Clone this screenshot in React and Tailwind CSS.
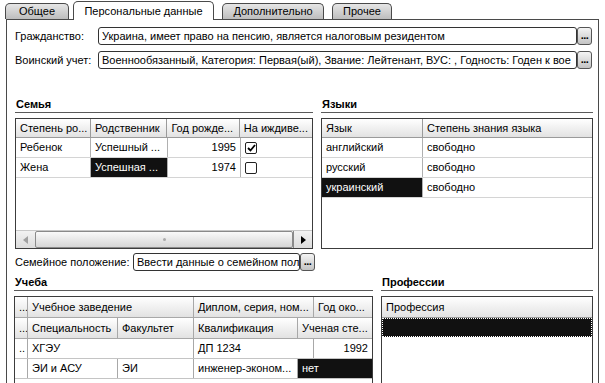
import React from "react";

const font = "font-['Liberation_Sans',Arial,sans-serif]";

function Tab({ label, active, className }) {
  if (active) {
    return (
      <div className={`h-[19px] -mb-px relative z-10 flex items-center justify-center bg-white border border-[#4a4a4a] border-b-0 rounded-t-[5px] ${className}`}>
        {label}
      </div>
    );
  }
  return (
    <div className={`h-[16px] flex items-center justify-center bg-gradient-to-b from-[#e6e6e6] to-[#bdbdbd] border border-[#4a4a4a] border-b-0 rounded-t-[5px] ${className}`}>
      {label}
    </div>
  );
}

function DotsButton() {
  return (
    <div className="w-[15px] h-full flex items-end justify-center pb-[3px] bg-gradient-to-b from-[#f4f4f4] to-[#c4c4c4] border border-[#555] rounded-[3px] font-bold text-[11px] leading-none tracking-[-0.5px]">
      ...
    </div>
  );
}

function Field({ value, width }) {
  return (
    <div className="flex h-[18px]">
      <div className={`${width} h-full border border-[#333] rounded-[3px] px-[3px] flex items-center overflow-hidden whitespace-nowrap`}>
        {value}
      </div>
      <DotsButton />
    </div>
  );
}

function SectionTitle({ title }) {
  return (
    <div className="h-[15px] border-b border-[#5a5a5a] font-bold text-[11px] leading-[13px] pl-px">{title}</div>
  );
}

const hdr = "bg-gradient-to-b from-[#ffffff] to-[#e2e2e2]";

function Check({ checked }) {
  return (
    <div className="w-[12px] h-[12px] border border-[#222] rounded-[2px] flex items-center justify-center bg-white">
      {checked && (
        <svg width="9" height="8" viewBox="0 0 9 8">
          <path d="M1 4 L3.5 6.5 L8 1" stroke="#000" strokeWidth="1.8" fill="none" />
        </svg>
      )}
    </div>
  );
}

function FamilyGrid() {
  const rows = [
    { a: "Ребенок", b: "Успешный ...", c: "1995", d: true },
    { a: "Жена", b: "Успешная ...", c: "1974", d: false, sel: true },
  ];
  return (
    <div className="w-[298px] h-[131px] border border-[#3c3c3c] flex flex-col">
      <div className={`flex h-[19px] border-b border-[#9a9a9a] ${hdr}`}>
        <div className="w-[75px] border-r border-[#9a9a9a] px-[4px] flex items-center whitespace-nowrap">Степень ро...</div>
        <div className="w-[77px] border-r border-[#9a9a9a] px-[4px] flex items-center whitespace-nowrap">Родственник</div>
        <div className="w-[73px] border-r border-[#9a9a9a] px-[4px] flex items-center whitespace-nowrap">Год рожде...</div>
        <div className="flex-1 px-[4px] flex items-center whitespace-nowrap">На иждиве...</div>
      </div>
      {rows.map((r) => (
        <div key={r.a} className="flex h-[20px] border-b border-[#d4d4d4]">
          <div className="w-[75px] border-r border-[#b0b0b0] px-[4px] flex items-center">{r.a}</div>
          <div className={`w-[77px] border-r border-[#b0b0b0] px-[4px] flex items-center whitespace-nowrap ${r.sel ? "bg-[#111] text-white" : ""}`}>{r.b}</div>
          <div className="w-[73px] border-r border-[#b0b0b0] px-[4px] flex items-center justify-end">{r.c}</div>
          <div className="flex-1 px-[4px] flex items-center"><Check checked={r.d} /></div>
        </div>
      ))}
      <div className="flex-1" />
      <div className="h-[18px] flex bg-gradient-to-b from-[#f2f2f2] to-[#dcdcdc] border-t border-[#c8c8c8]">
        <div className="w-[19px] flex items-center justify-center">
          <svg width="5" height="8" viewBox="0 0 5 8"><path d="M5 0 L0 4 L5 8 Z" fill="#a0a0a0" /></svg>
        </div>
        <div className="flex-1 border border-[#8a8a8a] rounded-[2px] bg-gradient-to-b from-[#fafafa] to-[#d6d6d6] flex items-center justify-center">
          <div className="w-[3px] h-[3px] rounded-full bg-[#aaa]" />
        </div>
        <div className="w-[19px] flex items-center justify-center border-l border-[#8a8a8a]">
          <svg width="5" height="8" viewBox="0 0 5 8"><path d="M0 0 L5 4 L0 8 Z" fill="#000" /></svg>
        </div>
      </div>
    </div>
  );
}

function LangGrid() {
  const rows = [
    { a: "английский" },
    { a: "русский" },
    { a: "украинский", sel: true },
  ];
  return (
    <div className="w-[272px] h-[131px] border border-[#3c3c3c] flex flex-col">
      <div className={`flex h-[19px] border-b border-[#9a9a9a] ${hdr}`}>
        <div className="w-[101px] border-r border-[#9a9a9a] px-[4px] flex items-center">Язык</div>
        <div className="flex-1 px-[4px] flex items-center">Степень знания языка</div>
      </div>
      {rows.map((r) => (
        <div key={r.a} className="flex h-[20px] border-b border-[#d4d4d4]">
          <div className={`w-[101px] border-r border-[#b0b0b0] px-[4px] flex items-center ${r.sel ? "bg-[#111] text-white" : ""}`}>{r.a}</div>
          <div className="flex-1 px-[4px] flex items-center">свободно</div>
        </div>
      ))}
    </div>
  );
}

function EduGrid() {
  const c = "border-r border-[#a8a8a8] px-[4px] flex items-center whitespace-nowrap overflow-hidden";
  return (
    <div className="w-[359px] h-[100px] border border-[#3c3c3c] border-b-0 flex flex-col">
      <div className={`flex h-[21px] border-b border-[#a8a8a8] ${hdr}`}>
        <div className={`w-[13px] ${c} px-[2px]`}>...</div>
        <div className={`w-[166px] ${c}`}>Учебное заведение</div>
        <div className={`w-[120px] ${c}`}>Диплом, серия, ном...</div>
        <div className="flex-1 px-[4px] flex items-center whitespace-nowrap">Год око...</div>
      </div>
      <div className={`flex h-[21px] border-b border-[#a8a8a8] ${hdr}`}>
        <div className={`w-[13px] ${c} px-[2px]`}>...</div>
        <div className={`w-[90px] ${c}`}>Специальность</div>
        <div className={`w-[76px] ${c}`}>Факультет</div>
        <div className={`w-[104px] ${c}`}>Квалификация</div>
        <div className="flex-1 px-[4px] flex items-center whitespace-nowrap">Ученая сте...</div>
      </div>
      <div className="flex h-[20px] border-b border-[#c4c4c4]">
        <div className={`w-[13px] ${c} px-[2px]`}>..</div>
        <div className={`w-[166px] ${c}`}>ХГЭУ</div>
        <div className={`w-[120px] ${c}`}>ДП 1234</div>
        <div className="flex-1 px-[4px] flex items-center justify-end">1992</div>
      </div>
      <div className="flex h-[20px] border-b border-[#c4c4c4]">
        <div className={`w-[13px] ${c}`}></div>
        <div className={`w-[90px] ${c}`}>ЭИ и АСУ</div>
        <div className={`w-[76px] ${c}`}>ЭИ</div>
        <div className={`w-[104px] ${c}`}>инженер-эконом...</div>
        <div className="flex-1 px-[4px] flex items-center bg-[#111] text-white">нет</div>
      </div>
    </div>
  );
}

function ProfGrid() {
  return (
    <div className="w-[212px] h-[100px] border border-[#3c3c3c] border-b-0 flex flex-col">
      <div className={`flex h-[21px] border-b border-[#9a9a9a] px-[4px] items-center ${hdr}`}>Профессия</div>
      <div className="h-[19px] bg-[#111] border border-dotted border-white" />
    </div>
  );
}

export default function App() {
  return (
    <div className={`w-[605px] h-[383px] bg-white overflow-hidden text-[11px] text-black ${font}`}>
      {/* tabs */}
      <div className="flex items-end h-[19px] pl-[5px]">
        <Tab label="Общее" className="w-[64px]" />
        <Tab label="Персональные данные" active className="w-[141px] ml-[4px]" />
        <Tab label="Дополнительно" className="w-[102px] ml-[8px]" />
        <Tab label="Прочее" className="w-[60px] ml-[8px]" />
      </div>

      <div className="ml-[6px] w-[593px] h-[370px] border border-[#4a4a4a] border-b-0 pl-[8px] pr-[4px] pt-[7px]">
        <div className="flex flex-col gap-[6px]">
          <div className="flex items-center">
            <div className="w-[83px]">Гражданство:</div>
            <Field width="w-[479px]" value="Украина, имеет право на пенсию, является налоговым резидентом" />
          </div>
          <div className="flex items-center">
            <div className="w-[83px] whitespace-nowrap">Воинский учет:</div>
            <Field width="w-[479px]" value="Военнообязанный, Категория: Первая(ый), Звание: Лейтенант, ВУС: , Годность: Годен к вое" />
          </div>
        </div>

        <div className="flex gap-[8px] mt-[29px]">
          <div className="flex flex-col w-[298px]">
            <SectionTitle title="Семья" />
            <div className="mt-[5px]"><FamilyGrid /></div>
          </div>
          <div className="flex flex-col w-[272px]">
            <SectionTitle title="Языки" />
            <div className="mt-[5px]"><LangGrid /></div>
          </div>
        </div>

        <div className="flex items-center mt-[4px]">
          <div className="w-[118px] whitespace-nowrap">Семейное положение:</div>
          <Field width="w-[167px]" value="Ввести данные о семейном пол" />
        </div>

        <div className="flex gap-[8px] mt-[5px] -ml-px">
          <div className="flex flex-col w-[359px]">
            <SectionTitle title="Учеба" />
            <div className="mt-[5px]"><EduGrid /></div>
          </div>
          <div className="flex flex-col w-[212px]">
            <SectionTitle title="Профессии" />
            <div className="mt-[5px]"><ProfGrid /></div>
          </div>
        </div>
      </div>
    </div>
  );
}
